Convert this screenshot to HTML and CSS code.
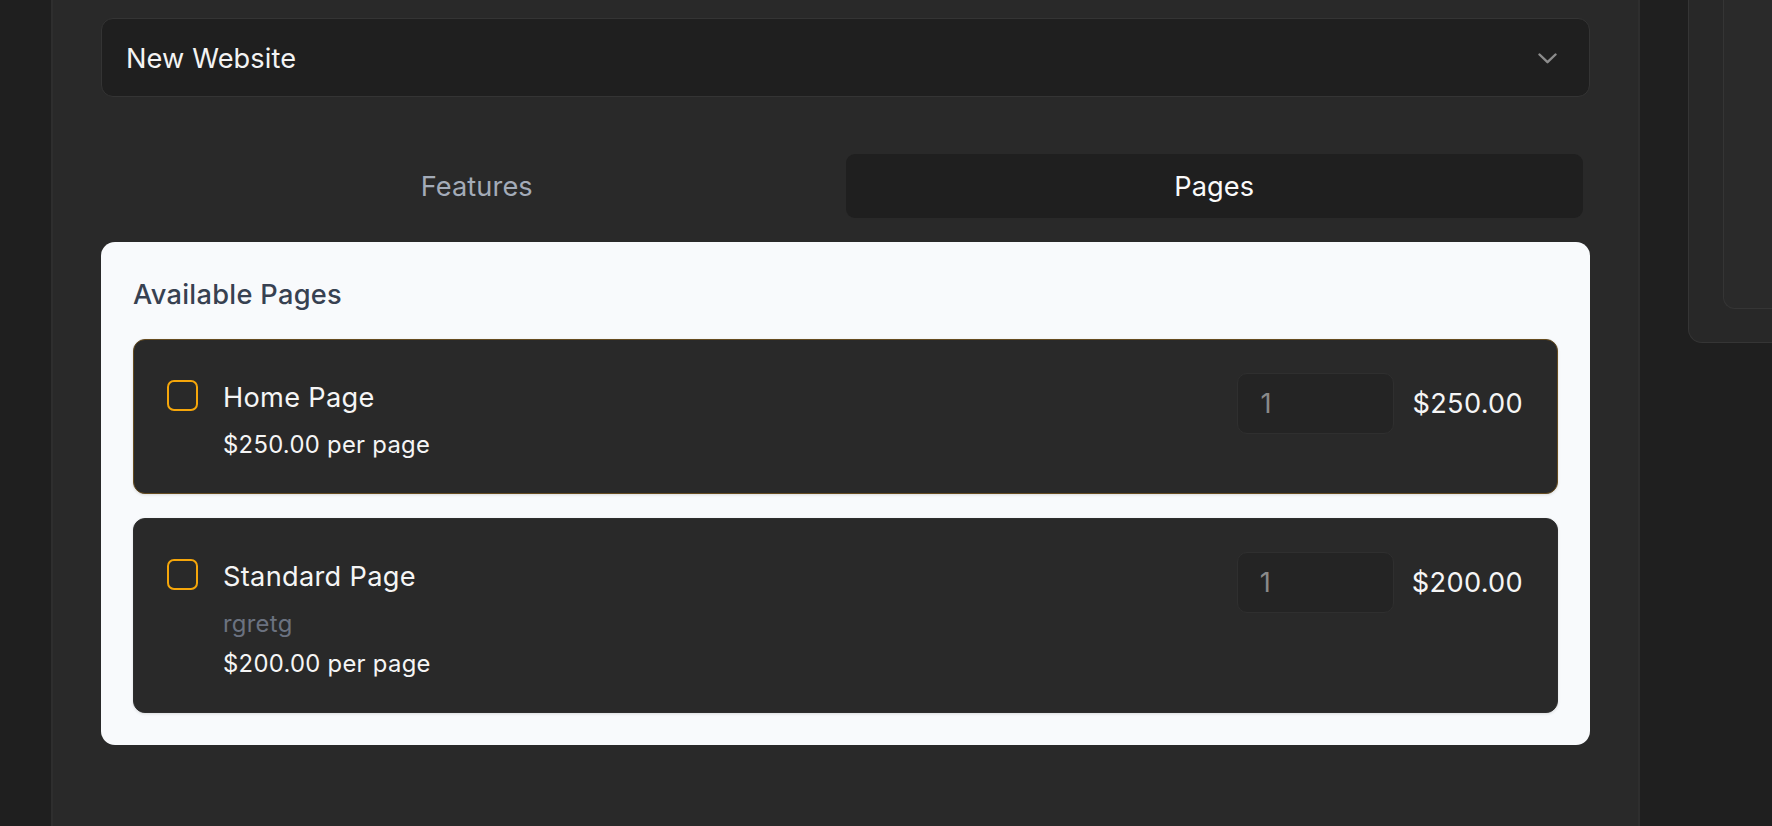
FILE: index.html
```html
<!DOCTYPE html>
<html lang="en">
<head>
<meta charset="utf-8">
<title>Pages</title>
<link rel="stylesheet" href="styles.css">
</head>
<body>
<div class="app">
  <aside class="rail"></aside>
  <main class="main">
    <div class="column">
      <div class="select">
        <span class="select-value">New Website</span>
        <svg class="chevron" width="19" height="11" viewBox="0 0 19 11"><polyline points="1.5,1.5 9.5,9.2 17.5,1.5" fill="none" stroke="#8c8c8c" stroke-width="2.4" stroke-linecap="round" stroke-linejoin="round"/></svg>
      </div>
      <div class="tabs">
        <div class="tab">Features</div>
        <div class="tab tab-active">Pages</div>
      </div>
      <section class="panel">
        <h2 class="panel-title">Available Pages</h2>
        <div class="list">
          <div class="item item-active">
            <div class="item-left">
              <span class="checkbox"></span>
              <div class="item-text">
                <div class="item-title">Home Page</div>
                <div class="item-price">$250.00 per page</div>
              </div>
            </div>
            <div class="item-right">
              <div class="qty">1</div>
              <div class="total">$250.00</div>
            </div>
          </div>
          <div class="item">
            <div class="item-left">
              <span class="checkbox"></span>
              <div class="item-text">
                <div class="item-title">Standard Page</div>
                <div class="item-desc">rgretg</div>
                <div class="item-price">$200.00 per page</div>
              </div>
            </div>
            <div class="item-right">
              <div class="qty">1</div>
              <div class="total">$200.00</div>
            </div>
          </div>
        </div>
      </section>
    </div>
  </main>
  <aside class="side">
    <div class="side-card">
      <div class="side-inner"></div>
    </div>
  </aside>
</div>
</body>
</html>
```
FILE: styles.css
```css
* { box-sizing: border-box; }
html, body {
  margin: 0;
  padding: 0;
  height: 100%;
}
body {
  background: #1f1f1f;
  font-family: Inter, "Liberation Sans", sans-serif;
  overflow: hidden;
}
.app {
  display: flex;
  height: 826px;
}
.rail {
  width: 53px;
  flex: none;
  background: #1f1f1f;
  border-right: 2px solid #2e2e2e;
}
.main {
  width: 1587px;
  flex: none;
  background: #292929;
  border-right: 2px solid #2e2e2e;
  padding: 18px 48px 0 48px;
}
.column {
  display: flex;
  flex-direction: column;
}
.select {
  height: 79px;
  background: #1f1f1f;
  border: 1px solid #343434;
  border-radius: 12px;
  display: flex;
  align-items: center;
  justify-content: space-between;
  padding: 2px 32px 0 24px;
}
.select-value {
  font-size: 27.2px;
  color: #f3f3f3;
  letter-spacing: 0.1px;
}
.chevron { display: block; }
.tabs {
  display: flex;
  margin-top: 50px;
  padding: 7px;
}
.tab {
  flex: 1;
  height: 64px;
  display: flex;
  align-items: center;
  justify-content: center;
  font-size: 27.2px;
  color: #a3abb8;
  border-radius: 9px;
  letter-spacing: 0.1px;
}
.tab-active {
  background: #1f1f1f;
  color: #fafafa;
}
.panel {
  margin-top: 17px;
  background: #f8fafc;
  border-radius: 14px;
  padding: 32px;
}
.panel-title {
  margin: 0 0 24px 0;
  font-size: 27.2px;
  line-height: 41px;
  font-weight: 450;
  color: #374151;
  letter-spacing: 0.3px;
}
.list {
  display: flex;
  flex-direction: column;
  gap: 24px;
}
.item {
  display: flex;
  justify-content: space-between;
  align-items: flex-start;
  background: #292929;
  border: 1px solid #2e2e2e;
  border-radius: 12px;
  padding: 33px 34px 31px 33px;
  box-shadow: 0 1px 3px rgba(0, 0, 0, 0.12);
}
.item-active {
  border-color: #664c20;
}
.item-left {
  display: flex;
  align-items: flex-start;
  gap: 25px;
}
.checkbox {
  width: 31px;
  height: 31px;
  margin-top: 7px;
  border: 2px solid #f5a60a;
  border-radius: 7px;
  flex: none;
}
.item-text {
  display: flex;
  flex-direction: column;
}
.item-title {
  font-size: 27.2px;
  line-height: 50px;
  font-weight: 420;
  color: #f5f5f5;
  letter-spacing: 0.3px;
}
.item-desc {
  margin-top: 5px;
  font-size: 23.8px;
  line-height: 34px;
  color: #6b7280;
  letter-spacing: 0.3px;
}
.item-price {
  margin-top: 5px;
  font-size: 23.8px;
  line-height: 34px;
  font-weight: 420;
  color: #f5f5f5;
  letter-spacing: 0.3px;
}
.item-desc + .item-price { margin-top: 6px; }
.item-right {
  display: flex;
  align-items: center;
  gap: 18px;
}
.qty {
  width: 157px;
  height: 61px;
  background: #242424;
  border: 1px solid #2f2f2f;
  border-radius: 10px;
  padding-left: 22px;
  display: flex;
  align-items: center;
  font-size: 27.2px;
  color: #8a8a8a;
}
.total {
  font-size: 27.2px;
  font-weight: 420;
  color: #f5f5f5;
  letter-spacing: 0.3px;
}
.side {
  flex: 1;
  padding-left: 48px;
  display: flex;
  align-items: flex-start;
}
.side-card {
  width: 100%;
  height: 343px;
  background: #282828;
  border: 1px solid #353535;
  border-top: 0;
  border-right: 0;
  border-radius: 0 0 0 14px;
  padding: 0 0 33px 34px;
  display: flex;
}
.side-inner {
  flex: 1;
  background: #2a2a2a;
  border: 1px solid #353535;
  border-top: 0;
  border-right: 0;
  border-radius: 0 0 0 12px;
}
```
